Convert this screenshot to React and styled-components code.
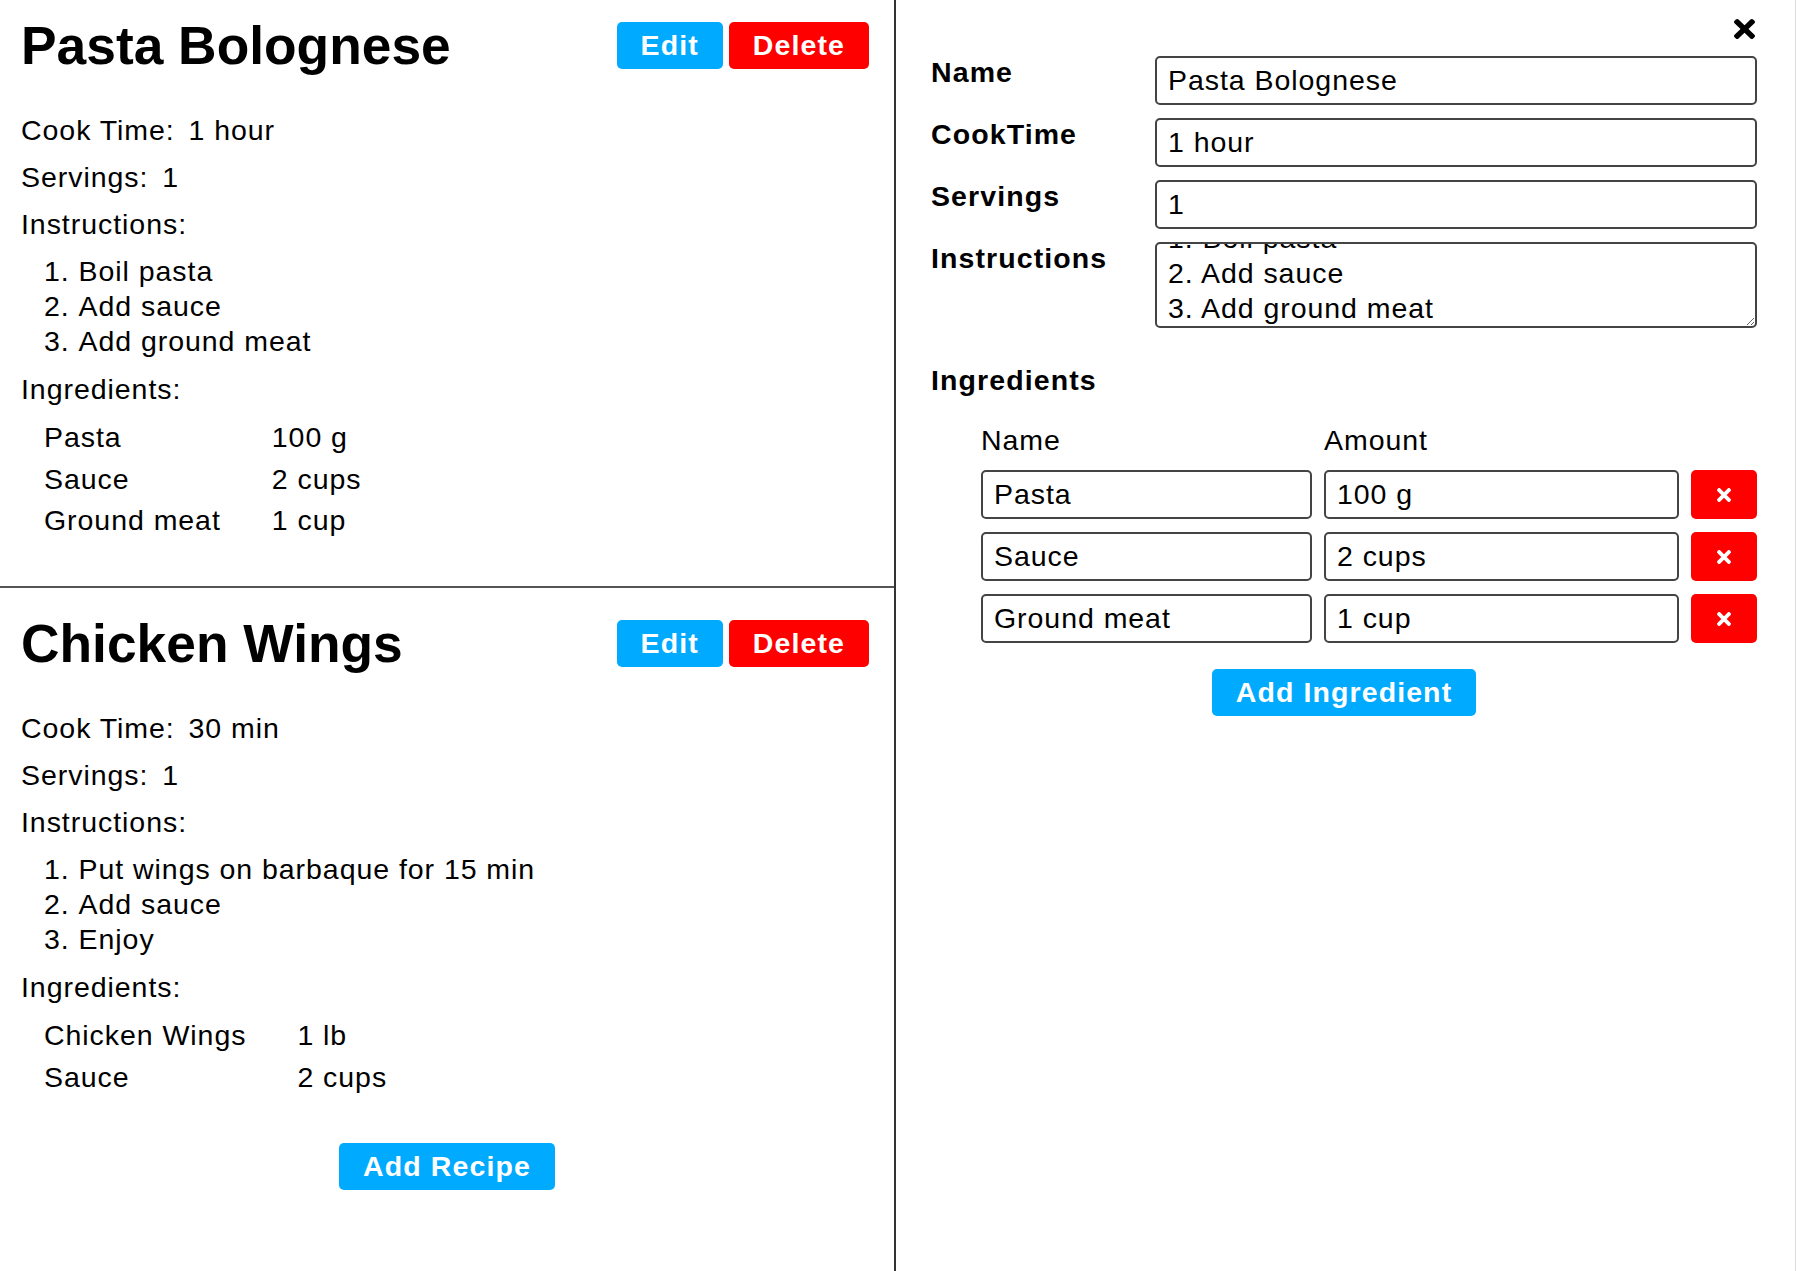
import React, { useEffect, useRef } from "react";
import styled, { createGlobalStyle } from "styled-components";

const GlobalStyle = createGlobalStyle`
  html, body {
    margin: 0;
    padding: 0;
    background: #ffffff;
  }
  body {
    font-family: "Liberation Sans", Arial, Helvetica, sans-serif;
    font-size: 28.5px;
    letter-spacing: 0.95px;
    color: #000000;
  }
  * { box-sizing: border-box; }
`;

const FONT = `"Liberation Sans", Arial, Helvetica, sans-serif`;

const Page = styled.div`
  display: flex;
  min-height: 100vh;
  width: 100%;
`;

const LeftPanel = styled.div`
  width: 896px;
  flex-shrink: 0;
  border-right: 2px solid #333333;
  display: flex;
  flex-direction: column;
`;

const RecipeList = styled.div`
  display: flex;
  flex-direction: column;
`;

const RecipeCard = styled.section`
  padding: 25.5px 25px 44px 21px;
  border-bottom: 2px solid #555555;
  &:first-child {
    padding-top: 15px;
  }
  &:last-child {
    border-bottom: none;
  }
`;

const TitleRow = styled.div`
  display: flex;
  align-items: center;
  justify-content: space-between;
`;

const Title = styled.h1`
  margin: 0;
  font-size: 53.33px;
  line-height: 61.33px;
  font-weight: bold;
  letter-spacing: 0;
`;

const ButtonGroup = styled.div`
  display: flex;
  gap: 6px;
`;

const Button = styled.button`
  font-family: ${FONT};
  font-size: 28.5px;
  letter-spacing: 1.1px;
  font-weight: bold;
  color: #ffffff;
  background: ${(p) => p.$bg};
  border: none;
  border-radius: 5px;
  height: 47px;
  padding: 0 24px;
  line-height: 47px;
  cursor: pointer;
`;

const Field = styled.div`
  line-height: 30.67px;
  margin-top: ${(p) => p.$mt}px;
`;

const FieldLabel = styled.span`
  margin-right: 5px;
`;

const InstructionList = styled.ol`
  margin: 14.5px 0 0;
  padding-left: 23px;
  list-style-position: inside;
  li {
    line-height: 35px;
  }
`;

const IngredientTable = styled.table`
  margin: 11.6px 0 0 23px;
  border-collapse: collapse;
  border-spacing: 0;
  td {
    padding: 5.55px 0;
    line-height: 30.67px;
    vertical-align: middle;
  }
  td:first-child {
    padding-right: 51px;
  }
`;

const CenterRow = styled.div`
  display: flex;
  justify-content: center;
  margin-top: ${(p) => p.$mt}px;
`;

const RightPanel = styled.div`
  flex: 1;
  padding: 0 38px 0 35px;
  border-right: 1px solid #dddddd;
`;

const CloseRow = styled.div`
  display: flex;
  justify-content: flex-end;
  height: 56px;
  padding-top: 19px;
  padding-right: 2px;
`;

const IconButton = styled.button`
  width: 21px;
  height: 20px;
  padding: 0;
  border: none;
  background: none;
  color: #000000;
  cursor: pointer;
  display: flex;
  svg {
    width: 21px;
    height: 20px;
  }
`;

const FormGrid = styled.div`
  display: grid;
  grid-template-columns: 224px 1fr;
  row-gap: 13px;
`;

const FormLabel = styled.label`
  font-weight: bold;
  letter-spacing: 1.1px;
  line-height: 30.67px;
  padding-top: 1.4px;
  align-self: start;
`;

const TextInput = styled.input`
  width: 100%;
  height: 49px;
  border: 2px solid #444444;
  border-radius: 5px;
  padding: 0 11px;
  font-family: ${FONT};
  font-size: 28.5px;
  letter-spacing: 0.95px;
  color: #000000;
  background: #ffffff;
  outline: none;
`;

const TextArea = styled.textarea`
  width: 100%;
  height: 86px;
  border: 2px solid #444444;
  border-radius: 5px;
  padding: 0 11px;
  font-family: ${FONT};
  font-size: 28.5px;
  letter-spacing: 0.95px;
  line-height: 35px;
  color: #000000;
  background: #ffffff;
  overflow: hidden;
  resize: vertical;
  outline: none;
  display: block;
`;

const SectionHeading = styled.div`
  margin-top: 37px;
  font-weight: bold;
  letter-spacing: 1.1px;
  line-height: 30.67px;
`;

const IngredientGrid = styled.div`
  display: grid;
  grid-template-columns: 331px 355px 66px;
  column-gap: 12px;
  row-gap: 13px;
  margin: 29.7px 0 0 50px;
`;

const ColHeader = styled.div`
  line-height: 30.67px;
  margin-bottom: 1px;
`;

const RemoveButton = styled.button`
  height: 49px;
  width: 66px;
  border: none;
  border-radius: 5px;
  background: #ff0000;
  color: #ffffff;
  display: flex;
  align-items: center;
  justify-content: center;
  padding: 0;
  cursor: pointer;
  svg {
    width: 14px;
    height: 14px;
  }
`;

const TimesIcon = () => (
  <svg viewBox="0 80 352 352" preserveAspectRatio="none" aria-hidden="true">
    <path
      fill="currentColor"
      d="M242.72 256l100.07-100.07c12.28-12.28 12.28-32.19 0-44.48l-22.24-22.24c-12.28-12.28-32.19-12.28-44.48 0L176 189.28 75.93 89.21c-12.28-12.28-32.19-12.28-44.48 0L9.21 111.45c-12.28 12.28-12.28 32.19 0 44.48L109.28 256 9.21 356.07c-12.28 12.28-12.28 32.19 0 44.48l22.24 22.24c12.28 12.28 32.2 12.28 44.48 0L176 322.72l100.07 100.07c12.28 12.28 32.2 12.28 44.48 0l22.24-22.24c12.28-12.28 12.28-32.19 0-44.48L242.72 256z"
    />
  </svg>
);

const BLUE = "#00aaff";
const RED = "#ff0000";

const recipes = [
  {
    name: "Pasta Bolognese",
    cookTime: "1 hour",
    servings: 1,
    instructions: ["Boil pasta", "Add sauce", "Add ground meat"],
    ingredients: [
      ["Pasta", "100 g"],
      ["Sauce", "2 cups"],
      ["Ground meat", "1 cup"],
    ],
  },
  {
    name: "Chicken Wings",
    cookTime: "30 min",
    servings: 1,
    instructions: ["Put wings on barbaque for 15 min", "Add sauce", "Enjoy"],
    ingredients: [
      ["Chicken Wings", "1 lb"],
      ["Sauce", "2 cups"],
    ],
  },
];

function Recipe({ recipe }) {
  return (
    <RecipeCard>
      <TitleRow>
        <Title>{recipe.name}</Title>
        <ButtonGroup>
          <Button $bg={BLUE}>Edit</Button>
          <Button $bg={RED}>Delete</Button>
        </ButtonGroup>
      </TitleRow>
      <Field $mt={38.6}>
        <FieldLabel>Cook Time:</FieldLabel> {recipe.cookTime}
      </Field>
      <Field $mt={16.5}>
        <FieldLabel>Servings:</FieldLabel> {recipe.servings}
      </Field>
      <Field $mt={16.5}>Instructions:</Field>
      <InstructionList>
        {recipe.instructions.map((s, i) => (
          <li key={i}>{s}</li>
        ))}
      </InstructionList>
      <Field $mt={14.5}>Ingredients:</Field>
      <IngredientTable>
        <tbody>
          {recipe.ingredients.map(([n, a], i) => (
            <tr key={i}>
              <td>{n}</td>
              <td>{a}</td>
            </tr>
          ))}
        </tbody>
      </IngredientTable>
    </RecipeCard>
  );
}

function EditPanel() {
  const taRef = useRef(null);
  useEffect(() => {
    if (taRef.current) {
      taRef.current.scrollTop = taRef.current.scrollHeight;
    }
  }, []);
  const editing = recipes[0];
  return (
    <RightPanel>
      <CloseRow>
        <IconButton aria-label="Close">
          <TimesIcon />
        </IconButton>
      </CloseRow>
      <FormGrid>
        <FormLabel>Name</FormLabel>
        <TextInput defaultValue={editing.name} />
        <FormLabel>CookTime</FormLabel>
        <TextInput defaultValue={editing.cookTime} />
        <FormLabel>Servings</FormLabel>
        <TextInput defaultValue={String(editing.servings)} />
        <FormLabel>Instructions</FormLabel>
        <TextArea
          ref={taRef}
          defaultValue={editing.instructions
            .map((s, i) => `${i + 1}. ${s}`)
            .join("\n")}
        />
      </FormGrid>
      <SectionHeading>Ingredients</SectionHeading>
      <IngredientGrid>
        <ColHeader>Name</ColHeader>
        <ColHeader>Amount</ColHeader>
        <ColHeader />
        {editing.ingredients.map(([n, a], i) => (
          <React.Fragment key={i}>
            <TextInput defaultValue={n} />
            <TextInput defaultValue={a} />
            <RemoveButton aria-label="Remove ingredient">
              <TimesIcon />
            </RemoveButton>
          </React.Fragment>
        ))}
      </IngredientGrid>
      <CenterRow $mt={26}>
        <Button $bg={BLUE}>Add Ingredient</Button>
      </CenterRow>
    </RightPanel>
  );
}

export default function App() {
  return (
    <>
      <GlobalStyle />
      <Page>
        <LeftPanel>
          <RecipeList>
            {recipes.map((r) => (
              <Recipe key={r.name} recipe={r} />
            ))}
          </RecipeList>
          <CenterRow $mt={1}>
            <Button $bg={BLUE}>Add Recipe</Button>
          </CenterRow>
        </LeftPanel>
        <EditPanel />
      </Page>
    </>
  );
}
